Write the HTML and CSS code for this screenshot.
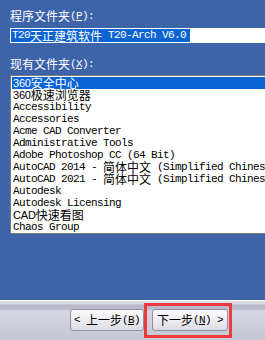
FILE: index.html
```html
<!DOCTYPE html>
<html>
<head>
<meta charset="utf-8">
<link rel="stylesheet" href="styles.css">
</head>
<body>
<div class="page">
  <div class="main">
    <div class="label"><span class="zh">程序文件夹</span>(<u>P</u>):</div>
    <div class="input"><span class="sel">T20<span class="zh">天正建筑软件</span> T20-Arch V6.0</span></div>
    <div class="label label2"><span class="zh">现有文件夹</span>(<u>X</u>):</div>
    <div class="list">
      <div class="item selected"><span class="sans">360</span><span class="zh">安全中心</span></div>
      <div class="item"><span class="sans">360</span><span class="zh">极速浏览器</span></div>
      <div class="item">Accessibility</div>
      <div class="item">Accessories</div>
      <div class="item">Acme CAD Converter</div>
      <div class="item">Administrative Tools</div>
      <div class="item">Adobe Photoshop CC (64 Bit)</div>
      <div class="item">AutoCAD 2014 - <span class="zh">简体中文</span> (Simplified Chinese)</div>
      <div class="item">AutoCAD 2021 - <span class="zh">简体中文</span> (Simplified Chinese)</div>
      <div class="item">Autodesk</div>
      <div class="item">Autodesk Licensing</div>
      <div class="item"><span class="sans">CAD</span><span class="zh">快速看图</span></div>
      <div class="item">Chaos Group</div>
    </div>
  </div>
  <div class="footer">
    <div class="btn btn-back"><span class="btn-text">&lt; <span class="zh">上一步</span>(<u>B</u>)</span></div>
    <div class="btn btn-next"><span class="btn-text"><span class="zh">下一步</span>(<u>N</u>) &gt;</span></div>
  </div>
  <div class="callout"></div>
</div>
</body>
</html>
```

FILE: styles.css
```css
html, body {
  margin: 0;
  padding: 0;
}
body {
  width: 265px;
  height: 340px;
  overflow: hidden;
  background: #3d64a9;
}
.page {
  position: relative;
  width: 265px;
  height: 340px;
  overflow: hidden;
  font-family: "Liberation Mono", "Noto Sans CJK SC", monospace;
  font-size: 11px;
  letter-spacing: -0.6px;
  line-height: 12px;
}
.zh {
  display: inline-block;
  height: 12px;
  vertical-align: top;
  font-family: "Noto Sans CJK SC", sans-serif;
  font-size: 12px;
  letter-spacing: 0;
  line-height: 12px;
}
.sans {
  display: inline-block;
  height: 12px;
  vertical-align: top;
  font-family: "Liberation Sans", sans-serif;
  font-size: 11px;
  letter-spacing: -0.2px;
  line-height: 12px;
}
u {
  text-decoration: underline;
  text-underline-offset: 1px;
}
.main {
  height: 300px;
  box-sizing: border-box;
  padding: 10px 0 0 10px;
  background: #3d64a9;
  overflow: hidden;
}
.label {
  color: #ffffff;
  height: 12px;
  white-space: nowrap;
}
.label2 {
  margin-top: 15px;
}
.input {
  margin-top: 6px;
  margin-right: -20px;
  height: 15px;
  box-sizing: border-box;
  padding: 1px 0 0 1px;
  background: #ffffff;
  white-space: nowrap;
  overflow: hidden;
}
.sel {
  display: inline-block;
  height: 13px;
  line-height: 13px;
  padding: 0 4px 0 1px;
  background: #0b64d4;
  color: #ffffff;
  vertical-align: top;
}
.sel .zh {
  height: 13px;
  line-height: 13px;
}
.list {
  margin-top: 5px;
  margin-right: -60px;
  height: 159px;
  box-sizing: border-box;
  border: 1px solid #7a7a7a;
  border-right: none;
  padding: 1px 0 0 1px;
  background: #ffffff;
  overflow: hidden;
}
.item {
  height: 12px;
  line-height: 12px;
  padding-left: 1px;
  color: #000000;
  white-space: nowrap;
  overflow: hidden;
}
.item.selected {
  background: #0b64d4;
  color: #ffffff;
}
.footer {
  height: 40px;
  box-sizing: border-box;
  padding: 9px 0 0 70px;
  display: flex;
  gap: 8px;
  background: linear-gradient(to bottom,
    #ffffff 0px, #ffffff 1px,
    #e4e4ec 1px, #d8d8e4 4px,
    #b6b6c8 5px, #bcbccd 9px,
    #d8d8e2 11px, #d0d0dc 24px,
    #c6c6d4 40px);
}
.btn {
  height: 22px;
  box-sizing: border-box;
  border: 1px solid #8e8ea2;
  border-radius: 3px;
  background: linear-gradient(to bottom, #fdfdfe 0%, #f0f0f4 40%, #dcdce4 100%);
  color: #000000;
  display: flex;
  align-items: center;
  justify-content: center;
}
.btn-text {
  display: block;
  height: 12px;
  line-height: 12px;
  white-space: pre;
}
.btn-back {
  width: 74px;
}
.btn-next {
  width: 76px;
}
.callout {
  position: absolute;
  left: 144px;
  top: 303px;
  width: 88px;
  height: 35px;
  box-sizing: border-box;
  border: 3px solid #ee3a3e;
}
```
